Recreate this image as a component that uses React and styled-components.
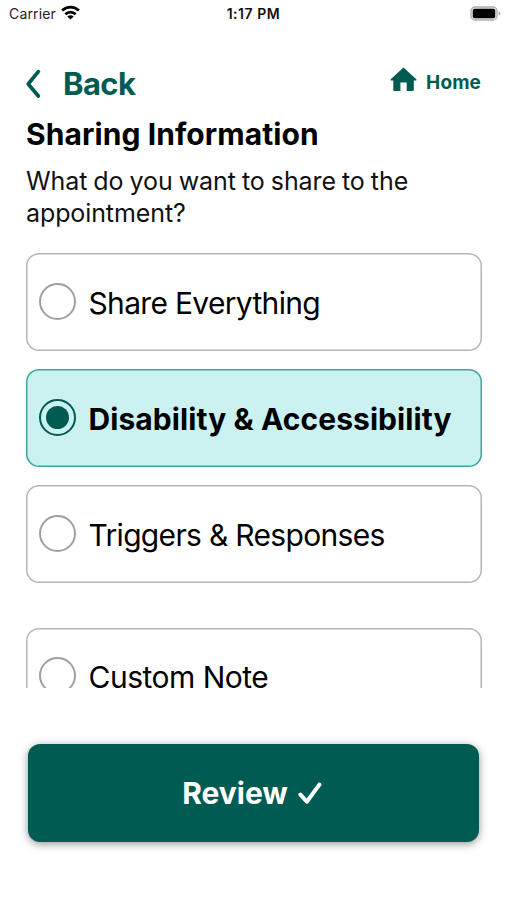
import React, { useState } from "react";
import styled, { createGlobalStyle } from "styled-components";

const GREEN = "#005b52";

const GlobalStyle = createGlobalStyle`
  * { box-sizing: border-box; }
  body { margin: 0; background: #fff; }
  button { font: inherit; border: 0; padding: 0; background: none; cursor: pointer; }
`;

const Screen = styled.div`
  width: 507px;
  height: 900px;
  overflow: hidden;
  display: flex;
  flex-direction: column;
  background: #fff;
  color: #000;
  font-family: Inter, "Liberation Sans", sans-serif;
`;

const StatusBar = styled.header`
  height: 28px;
  flex: none;
  display: grid;
  grid-template-columns: 1fr auto 1fr;
  align-items: center;
  padding: 0 6px;
  font-size: 14px;
  line-height: 28px;
`;

const Carrier = styled.div`
  display: flex;
  align-items: center;
  gap: 5.5px;
  padding-left: 3px;
  color: #222;
  letter-spacing: 0.15px;
  svg { margin-top: -3px; }
`;

const Clock = styled.div`
  font-size: 14px;
  font-weight: 600;
  letter-spacing: 0.55px;
  color: #111;
`;

const Battery = styled.div`
  display: flex;
  justify-content: flex-end;
  margin-top: -1px;
`;

const NavBar = styled.nav`
  height: 83px;
  flex: none;
  display: flex;
  justify-content: space-between;
  align-items: flex-start;
  padding: 36px 26px 0 25px;
`;

const BackButton = styled.button`
  && { font-size: 31px; font-weight: 700; line-height: 40px; }
  display: flex;
  align-items: center;
  gap: 20px;
  color: ${GREEN};
  letter-spacing: -0.6px;
`;

const HomeButton = styled.button`
  && { font-size: 19px; font-weight: 700; line-height: 38px; }
  display: flex;
  align-items: center;
  gap: 9px;
  color: ${GREEN};
  letter-spacing: 0.1px;
  svg { margin-top: -8px; }
`;

const Main = styled.main`
  height: 577px;
  flex: none;
  overflow: hidden;
  padding: 3px 25px 0 26px;
`;

const Title = styled.h1`
  margin: 0;
  font-size: 30px;
  font-weight: 700;
  line-height: 40px;
  letter-spacing: 0.08px;
`;

const Question = styled.p`
  margin: 11px 0 0;
  font-size: 25px;
  line-height: 32px;
  letter-spacing: -0.1px;
  word-spacing: -0.8px;
  color: #111;
`;

const Options = styled.div`
  display: flex;
  flex-direction: column;
  gap: 18px;
  margin-top: 24px;
`;

const OptionCard = styled.button`
  && { font-size: 30px; font-weight: ${(p) => (p.$selected ? 700 : 400)}; line-height: 40px; }
  flex: none;
  height: 98px;
  width: 100%;
  display: flex;
  align-items: center;
  gap: 12.5px;
  padding: 0 0 2px 13px;
  margin-top: ${(p) => (p.$separated ? 26.5 : 0)}px;
  border-radius: 13px;
  background: ${(p) => (p.$selected ? "#cbf2f0" : "#fff")};
  box-shadow: inset 0 0 0 1.5px ${(p) => (p.$selected ? "#3fa69a" : "#b5b5b5")};
  color: #000;
  letter-spacing: ${(p) => p.$tracking}px;
  white-space: nowrap;
`;

const OptionLabel = styled.span`
  padding-top: 3px;
`;

const Radio = styled.span`
  width: 37px;
  height: 37px;
  flex: none;
  display: grid;
  place-items: center;
  border: 2px solid ${(p) => (p.$selected ? GREEN : "#a0a0a0")};
  border-radius: 50%;
  &::after {
    content: "";
    width: 23px;
    height: 23px;
    border-radius: 50%;
    background: ${(p) => (p.$selected ? GREEN : "transparent")};
  }
`;

const Footer = styled.footer`
  padding: 56px 28px 0;
`;

const ReviewButton = styled.button`
  && { font-size: 30px; font-weight: 700; line-height: 40px; }
  width: 451px;
  height: 98px;
  display: flex;
  align-items: center;
  justify-content: center;
  gap: 10px;
  padding-right: 3px;
  border-radius: 12px;
  background: ${GREEN};
  color: #fff;
  letter-spacing: 0;
  box-shadow: 0 2px 8px rgba(0, 0, 0, 0.42);
`;

const WifiIcon = () => (
  <svg width="19" height="15" viewBox="0 0 19 15" fill="none" stroke="#000" strokeWidth="2.8">
    <path d="M1.1 5.6C5.8 .9 13.2 .9 17.9 5.6" />
    <path d="M4.3 9.2C7.3 6.3 11.7 6.3 14.7 9.2" />
    <path d="M9.5 14.6 6.3 11.5C8.2 9.8 10.8 9.8 12.7 11.5Z" fill="#000" stroke="none" />
  </svg>
);

const BatteryIcon = () => (
  <svg width="31" height="15" viewBox="0 0 31 15">
    <rect x="1" y="1" width="26" height="13" rx="4" fill="#e4e4e4" stroke="#b0b0b0" strokeWidth="1.3" />
    <rect x="2.8" y="2.8" width="22.4" height="9.4" rx="2" fill="#000" />
    <path d="M28.6 5.3Q30.5 6 30.5 7.5T28.6 9.7Z" fill="#aaa" />
  </svg>
);

const ChevronIcon = () => (
  <svg width="18" height="30" viewBox="0 0 18 30" fill="none" stroke={GREEN} strokeWidth="3.7" strokeLinecap="round" strokeLinejoin="round">
    <path d="M13.3 2.6 3.2 15 13.3 27" />
  </svg>
);

const HomeIcon = () => (
  <svg width="27" height="25" viewBox="0 0 27 25" fill={GREEN}>
    <path d="M13.5.4 26.3 12.3Q27 13.6 25.8 13.6H23.8V22.8Q23.8 24 22.6 24H16.7V15.4H10.4V24H4.5Q3.3 24 3.3 22.8V13.6H1.2Q0 13.6.7 12.3Z" />
  </svg>
);

const CheckIcon = () => (
  <svg width="24" height="23" viewBox="0 0 24 23" fill="none" stroke="#fff" strokeWidth="4" strokeLinecap="round" strokeLinejoin="round">
    <path d="M2.4 12.6 8.8 19.7 21.4 2.6" />
  </svg>
);

const OPTIONS = [
  { label: "Share Everything", tracking: -0.68 },
  { label: "Disability & Accessibility", tracking: 0.08 },
  { label: "Triggers & Responses", tracking: -0.68 },
  { label: "Custom Note", tracking: -0.5, separated: true },
];

export default function App() {
  const [selected, setSelected] = useState(1);
  return (
    <Screen>
      <GlobalStyle />
      <StatusBar>
        <Carrier>Carrier<WifiIcon /></Carrier>
        <Clock>1:17 PM</Clock>
        <Battery><BatteryIcon /></Battery>
      </StatusBar>
      <NavBar>
        <BackButton><ChevronIcon />Back</BackButton>
        <HomeButton><HomeIcon />Home</HomeButton>
      </NavBar>
      <Main>
        <Title>Sharing Information</Title>
        <Question>What do you want to share to the appointment?</Question>
        <Options role="radiogroup">
          {OPTIONS.map((o, i) => (
            <OptionCard
              key={o.label}
              role="radio"
              aria-checked={i === selected}
              $selected={i === selected}
              $separated={o.separated}
              $tracking={o.tracking}
              onClick={() => setSelected(i)}
            >
              <Radio $selected={i === selected} />
              <OptionLabel>{o.label}</OptionLabel>
            </OptionCard>
          ))}
        </Options>
      </Main>
      <Footer>
        <ReviewButton>Review<CheckIcon /></ReviewButton>
      </Footer>
    </Screen>
  );
}
